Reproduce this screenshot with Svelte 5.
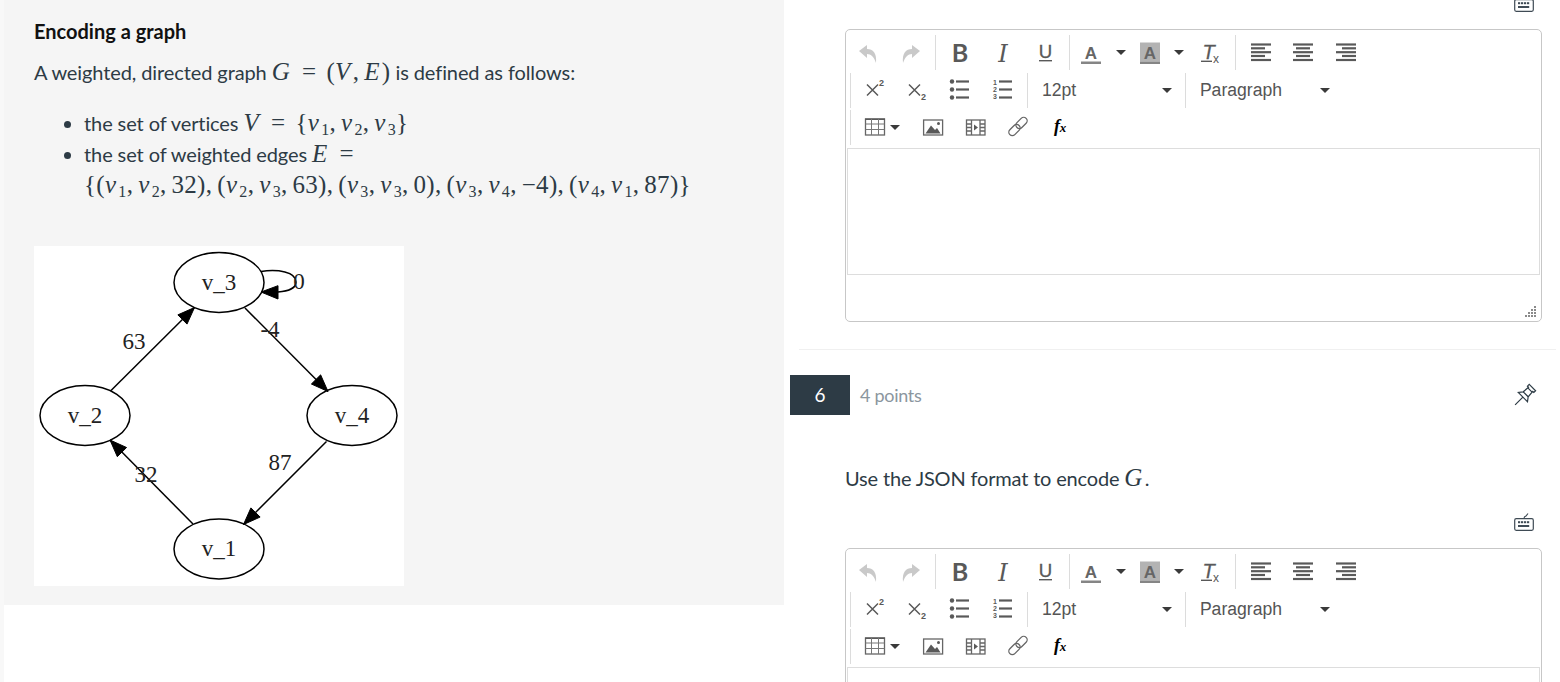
<script>
	const edges = [
		{ from: [111, 390.5], to: [194.5, 307.5] },
		{ from: [245, 308], to: [328, 391.5] },
		{ from: [326.5, 441.5], to: [243.5, 524.5] },
		{ from: [193, 524], to: [110, 440] }
	];

	const nodes = [
		{ name: 'v_3', x: 219, y: 282.5, base: 290 },
		{ name: 'v_2', x: 85, y: 415.5, base: 423 },
		{ name: 'v_4', x: 352, y: 415.5, base: 423 },
		{ name: 'v_1', x: 219, y: 549, base: 556 }
	];

	const labels = [
		{ text: '0', x: 299, y: 289 },
		{ text: '-4', x: 270, y: 337 },
		{ text: '63', x: 134, y: 349 },
		{ text: '87', x: 280, y: 470 },
		{ text: '32', x: 146, y: 482 }
	];

	const tuples = [
		[1, 2, '32'],
		[2, 3, '63'],
		[3, 3, '0'],
		[3, 4, '−4'],
		[4, 1, '87']
	];

	// arrowhead polygon for a straight edge
	function head(edge) {
		const [x1, y1] = edge.from;
		const [x2, y2] = edge.to;
		const len = Math.hypot(x2 - x1, y2 - y1);
		const ux = (x2 - x1) / len;
		const uy = (y2 - y1) / len;
		const bx = x2 - ux * 17;
		const by = y2 - uy * 17;
		return `${x2},${y2} ${bx - uy * 6.5},${by + ux * 6.5} ${bx + uy * 6.5},${by - ux * 6.5}`;
	}

	// dots of the resize grip, bottom right corner
	const grip = [];
	for (let row = 0; row < 4; row++) {
		for (let col = 3 - row; col < 4; col++) {
			grip.push({ x: col * 3, y: row * 3 });
		}
	}

	const gridX = [8.5, 15.5];
	const gridY = [8, 13.5];
	const alignLines = [3.5, 7.3, 11.2, 15, 19];
</script>

{#snippet vertex(n)}<i>v</i><sub>{n}</sub>{/snippet}

{#snippet aligned(x1, x2)}
	<svg viewBox="0 0 24 24">
		{#each alignLines as y, i}
			<line x1={i % 2 ? x1 : 2} x2={i % 2 ? x2 : 22} y1={y} y2={y} class="thick" />
		{/each}
	</svg>
{/snippet}

{#snippet keyboard()}
	<div class="kb-row">
		<svg class="kb" viewBox="0 0 20 18">
			<rect x="0.7" y="5.7" width="18.6" height="11.6" rx="1.5" />
			<path d="M10 5.5 Q10 3.5 12 3 L14 0.5" />
			{#each [4, 7, 10, 13] as x}
				<rect class="key" {x} y="8.2" width="2.2" height="2" />
			{/each}
			<rect class="key" x="4" y="12" width="11.2" height="2" />
		</svg>
	</div>
{/snippet}

{#snippet editor()}
	<div class="editor">
		<div class="toolbar">
			<div class="row">
				<div class="group first">
					<span class="btn">
						<svg viewBox="0 0 24 24"><path class="off" d="M3 10 L11 4 V8 C17 8 21 12 20 22 C18 16 15 13 11 13 V17 Z" /></svg>
					</span>
					<span class="btn">
						<svg viewBox="0 0 24 24"><path class="off" d="M21 10 L13 4 V8 C7 8 3 12 4 22 C6 16 9 13 13 13 V17 Z" /></svg>
					</span>
				</div>
				<div class="group">
					<span class="btn">
						<svg viewBox="0 0 24 24"><text x="12" y="20.5" class="tb">B</text></svg>
					</span>
					<span class="btn">
						<svg viewBox="0 0 24 24"><text x="12" y="20.5" class="ti">I</text></svg>
					</span>
					<span class="btn">
						<svg viewBox="0 0 24 24">
							<text x="12.5" y="16.8" class="tu">U</text>
							<rect x="6" y="19" width="13" height="1.4" class="solid" />
						</svg>
					</span>
				</div>
				<div class="group colors">
					<span class="btn">
						<svg viewBox="0 0 24 24">
							<text x="12" y="17.5" class="ta">A</text>
							<rect x="2" y="20.5" width="20" height="2.5" class="bar" />
						</svg>
					</span>
					<span class="split"><span class="caret"></span></span>
					<span class="btn">
						<svg viewBox="0 0 24 24">
							<rect x="2" y="1.5" width="20" height="19" class="hl" />
							<text x="12" y="17.5" class="ta">A</text>
							<rect x="2" y="20.5" width="20" height="2.5" class="bar" />
						</svg>
					</span>
					<span class="split"><span class="caret"></span></span>
					<span class="btn clear">
						<svg viewBox="0 0 24 24">
							<text x="9.5" y="17.5" class="tt">T</text>
							<rect x="2" y="19.6" width="11" height="1.4" class="solid" />
							<text x="14" y="21.5" class="tx">x</text>
						</svg>
					</span>
				</div>
				<div class="group last">
					<span class="btn">{@render aligned(2, 16)}</span>
					<span class="btn">{@render aligned(5, 19)}</span>
					<span class="btn">{@render aligned(8, 22)}</span>
				</div>
			</div>

			<div class="row indented">
				<div class="group lists">
					<span class="btn">
						<svg viewBox="0 0 24 24">
							<path class="line" d="M5 6.5 L16 17.5 M16 6.5 L5 17.5" />
							<text x="17" y="8" class="tiny">2</text>
						</svg>
					</span>
					<span class="btn">
						<svg viewBox="0 0 24 24">
							<path class="line" d="M4 6.5 L15 17.5 M15 6.5 L4 17.5" />
							<text x="16" y="22" class="tiny">2</text>
						</svg>
					</span>
					<span class="btn">
						<svg viewBox="0 0 24 24">
							{#each [3.5, 11.5, 19.5] as y}
								<circle cx="5" cy={y} r="2.2" class="solid" />
								<line x1="9" x2="22" y1={y} y2={y} class="thick" />
							{/each}
						</svg>
					</span>
					<span class="btn">
						<svg viewBox="0 0 24 24">
							{#each [1, 2, 3] as n}
								<text x="5" y={n * 7 - 0.5} class="num">{n}</text>
								<line x1="9" x2="22" y1={n * 8 - 4.5} y2={n * 8 - 4.5} class="thick" />
							{/each}
						</svg>
					</span>
				</div>
				<div class="group select size">
					<span>12pt</span>
					<span class="caret"></span>
				</div>
				<div class="group select format">
					<span>Paragraph</span>
					<span class="caret"></span>
				</div>
			</div>

			<div class="row indented">
				<div class="group plain">
					<span class="btn table">
						<svg viewBox="0 0 24 24">
							<rect x="2.5" y="3" width="19" height="16" class="outline" />
							<rect x="2" y="2.5" width="20" height="1.5" class="solid" />
							{#each gridX as x}
								<line x1={x} x2={x} y1="3" y2="19" class="grid" />
							{/each}
							{#each gridY as y}
								<line x1="2.5" x2="21.5" y1={y} y2={y} class="grid" />
							{/each}
						</svg>
						<span class="caret"></span>
					</span>
					<span class="btn">
						<svg viewBox="0 0 24 24">
							<rect x="2.6" y="4" width="19" height="15" class="outline" />
							<path class="solid" d="M4.5 17.5 L10 9.5 L14 14 L16 12 L19.5 17.5 Z" />
							<circle cx="17.5" cy="7.5" r="1.5" class="solid" />
						</svg>
					</span>
					<span class="btn">
						<svg viewBox="0 0 24 24">
							<rect x="2.5" y="4" width="18.5" height="15" class="outline" />
							<path class="outline" d="M7.5 4 V19 M16 4 V19 M2.5 8 H7.5 M2.5 11.5 H7.5 M2.5 15 H7.5 M16 8 H21 M16 11.5 H21 M16 15 H21" />
							<path class="solid" d="M10 8.5 L14 11.5 L10 14.5 Z" />
						</svg>
					</span>
					<span class="btn">
						<svg viewBox="0 0 24 24">
							<g transform="rotate(-45 12 10.5)">
								<rect x="0.5" y="7" width="13" height="7" rx="3.5" class="outline" />
								<rect x="10.5" y="7" width="13" height="7" rx="3.5" class="outline" />
							</g>
						</svg>
					</span>
					<span class="btn">
						<svg viewBox="0 0 24 24">
							<text x="8" y="15.5" class="fx">f</text>
							<text x="14" y="15.5" class="fx small">x</text>
						</svg>
					</span>
				</div>
			</div>
		</div>
		<div class="area"></div>
		<div class="status">
			<svg class="grip" viewBox="0 0 12 12">
				{#each grip as dot}
					<rect x={dot.x} y={dot.y} width="2" height="2" />
				{/each}
			</svg>
		</div>
	</div>
{/snippet}

<div class="page">
	<section class="intro">
		<h3>Encoding a graph</h3>
		<p>
			A weighted, directed graph
			<span class="math"><i>G</i><span class="rel">=</span>(<i>V</i>,<span class="sp"></span><i>E</i>)</span>
			is defined as follows:
		</p>
		<ul>
			<li>
				the set of vertices
				<span class="math"><i>V</i><span class="rel">=</span>&#123;{@render vertex(1)},<span class="sp"></span>{@render vertex(2)},<span class="sp"></span>{@render vertex(3)}&#125;</span>
			</li>
			<li>
				the set of weighted edges
				<span class="math"><i>E</i><span class="rel">=</span></span>
				<span class="math wide">&#123;{#each tuples as t, i}({@render vertex(t[0])},<span class="sp"></span>{@render vertex(t[1])},<span class="sp"></span>{t[2]}){#if i < tuples.length - 1},<span class="sp"></span>{/if}{/each}&#125;</span>
			</li>
		</ul>
		<svg class="figure" viewBox="34 246 370 340">
			{#each nodes as node}
				<ellipse cx={node.x} cy={node.y} rx="45" ry="30" />
				<text x={node.x} y={node.base}>{node.name}</text>
			{/each}
			{#each edges as edge}
				<line x1={edge.from[0]} y1={edge.from[1]} x2={edge.to[0]} y2={edge.to[1]} />
				<polygon points={head(edge)} />
			{/each}
			<path d="M261 271.5 C278 269 296 272 296 282 C296 289 288 291 278 292" />
			<polygon points="261,292 278,285.7 278,299" />
			{#each labels as label}
				<text x={label.x} y={label.y}>{label.text}</text>
			{/each}
		</svg>
	</section>

	<section class="answers">
		{@render keyboard()}
		{@render editor()}
		<hr />
		<div class="q-head">
			<span class="badge">6</span>
			<span class="points">4 points</span>
			<svg class="pin" viewBox="0 0 24 24">
				<g transform="rotate(45 12 12)">
					<path d="M7.5 1.5 H16.5 V4 H15 L15.5 11 L18.5 15 H5.5 L8.5 11 L9 4 H7.5 Z" />
					<path d="M9 5 H15 M8.5 11 H15.5 M12 15 V26" />
				</g>
			</svg>
		</div>
		<p class="prompt">Use the JSON format to encode <span class="math"><i>G</i></span>.</p>
		{@render keyboard()}
		{@render editor()}
	</section>
</div>

<style>
	:global(body) {
		overflow: hidden;
		background: #fff;
	}

	.page {
		display: flex;
		align-items: flex-start;
		height: 682px;
		overflow: hidden;
		border-left: 4px solid #f8f8f8;
		font-family: Lato, sans-serif;
		color: #2d3b45;
	}

	/* ------ left panel ------ */
	.intro {
		flex: none;
		width: 780px;
		box-sizing: border-box;
		padding: 18px 30px 19px;
		background: #f5f5f5;
	}

	h3 {
		margin: 0;
		font-size: 20px;
		line-height: 27px;
		font-weight: 700;
		color: #111;
	}

	.intro p {
		margin: 12px 0 0;
		font-size: 20px;
		line-height: 30px;
		letter-spacing: -0.1px;
	}

	ul {
		margin: 21px 0 0;
		padding-left: 50px;
		font-size: 20px;
		line-height: 31px;
		letter-spacing: -0.1px;
	}

	.math {
		font-family: 'Liberation Serif', serif;
		font-size: 25px;
		line-height: 0;
		letter-spacing: 0.3px;
		white-space: nowrap;
	}

	.math i {
		padding-right: 2px;
	}

	.math sub {
		font-size: 16px;
		line-height: 0;
		vertical-align: -4px;
	}

	.rel {
		margin: 0 10px;
	}

	.sp {
		display: inline-block;
		width: 5px;
	}

	.wide {
		display: block;
		margin-top: -1px;
		line-height: 31px;
	}

	.figure {
		display: block;
		width: 370px;
		height: 340px;
		margin-top: 46px;
		background: #fff;
	}

	.figure ellipse,
	.figure line,
	.figure path {
		fill: none;
		stroke: #000;
		stroke-width: 1.5;
	}

	.figure polygon {
		fill: #000;
		stroke: #000;
	}

	.figure text {
		font-family: 'Liberation Serif', serif;
		font-size: 23px;
		text-anchor: middle;
		fill: #222;
	}

	/* ------ right column ------ */
	.answers {
		flex: 1;
		min-width: 0;
		margin-top: -6px;
	}

	.kb-row {
		display: flex;
		justify-content: flex-end;
		padding-right: 26px;
		margin-bottom: 17px;
	}

	.kb {
		display: block;
		width: 20px;
		height: 18px;
		fill: none;
		stroke: #3f4b55;
		stroke-width: 1.2;
	}

	.kb .key {
		fill: #3f4b55;
		stroke: none;
	}

	.editor {
		box-sizing: border-box;
		height: 293px;
		margin: 0 18px 0 61px;
		border: 1px solid #c7c7c7;
		border-radius: 5px;
		background: #fff;
		display: flex;
		flex-direction: column;
	}

	.toolbar {
		display: flex;
		flex-direction: column;
		gap: 2.5px;
		padding: 5px 0 3px;
	}

	.row {
		display: flex;
		height: 35px;
		padding-left: 1px;
	}

	.row.indented {
		padding-left: 4px;
	}

	.row.indented .group:first-child {
		border-left: 1px solid #dcdcdc;
		padding-left: 2px;
	}

	.group {
		display: flex;
		align-items: center;
		padding: 0 2.5px 0 3px;
		border-right: 1px solid #dcdcdc;
	}

	.group.first,
	.group.colors {
		padding-left: 0;
	}

	.group.lists {
		padding-right: 3.5px;
	}

	.group.last,
	.group.plain {
		border-right: 0;
	}

	.btn {
		display: flex;
		align-items: center;
		justify-content: center;
		flex: none;
		width: 42.6px;
		height: 35px;
	}

	.btn.clear {
		margin-left: 3px;
	}

	.btn svg {
		display: block;
		width: 24px;
		height: 24px;
		flex: none;
		overflow: visible;
	}

	.btn.table {
		width: 59px;
		justify-content: flex-start;
		padding-left: 10px;
		box-sizing: border-box;
		gap: 3px;
	}

	.split {
		display: flex;
		justify-content: center;
		width: 16px;
		flex: none;
	}

	.caret {
		display: block;
		flex: none;
		width: 0;
		height: 0;
		border-left: 5px solid transparent;
		border-right: 5px solid transparent;
		border-top: 5px solid #3a3a3a;
	}

	.select {
		box-sizing: border-box;
		justify-content: space-between;
		font-family: 'Liberation Sans', sans-serif;
		font-size: 17.6px;
		color: #555;
		padding: 0 14px;
	}

	.size {
		width: 158px;
		padding-right: 13px;
	}

	.format {
		width: 158px;
		border-right: 0;
	}

	svg .off {
		fill: #c9c9c9;
	}

	svg .thick {
		stroke: #595959;
		stroke-width: 2.2;
	}

	svg .line {
		fill: none;
		stroke: #595959;
		stroke-width: 1.5;
	}

	svg .outline {
		fill: none;
		stroke: #666;
		stroke-width: 1.3;
	}

	svg .grid {
		stroke: #777;
		stroke-width: 1;
	}

	svg .solid {
		fill: #595959;
	}

	svg .bar {
		fill: #858585;
	}

	svg .hl {
		fill: #b3b3b3;
	}

	svg text {
		font-family: 'Liberation Sans', sans-serif;
		fill: #595959;
		text-anchor: middle;
	}

	svg .tb {
		font-family: Lato, sans-serif;
		font-size: 25px;
		font-weight: 700;
	}

	svg .ti {
		font-family: 'DejaVu Serif', serif;
		font-size: 24px;
		font-style: italic;
	}

	svg .tu {
		font-size: 18.6px;
		stroke: #595959;
		stroke-width: 0.3;
	}

	svg .ta {
		font-size: 17px;
		font-weight: 700;
		fill: #666;
	}

	svg .tt {
		font-size: 20px;
		font-style: italic;
		stroke: #595959;
		stroke-width: 0.3;
	}

	svg .tx {
		font-size: 12px;
		text-anchor: start;
	}

	svg .tiny {
		font-size: 9px;
		font-weight: 700;
		text-anchor: start;
	}

	svg .num {
		font-size: 7px;
		font-weight: 700;
	}

	svg .fx {
		font-family: 'Liberation Serif', serif;
		font-size: 18px;
		font-weight: 700;
		font-style: italic;
		fill: #000;
	}

	svg .fx.small {
		font-size: 13px;
	}

	.area {
		height: 127px;
		flex: none;
		margin: 0 1px;
		border: 1px solid #ddd;
		box-sizing: border-box;
	}

	.status {
		flex: 1;
		display: flex;
		justify-content: flex-end;
		align-items: flex-end;
		padding: 0 4px 3px 0;
	}

	.grip {
		width: 12px;
		height: 12px;
		fill: #8a8a8a;
	}

	hr {
		height: 1px;
		margin: 27px 4px 25px 15px;
		border: 0;
		background: #f0f0f0;
	}

	.q-head {
		display: flex;
		align-items: center;
		margin-left: 6px;
		height: 40px;
	}

	.badge {
		flex: none;
		width: 60px;
		height: 40px;
		line-height: 40px;
		text-align: center;
		background: #2d3b45;
		color: #fff;
		font-size: 19px;
	}

	.points {
		margin-left: 10px;
		font-size: 18px;
		letter-spacing: -0.3px;
		color: #8b969e;
	}

	.pin {
		width: 24px;
		height: 24px;
		margin: 0 23px 0 auto;
		fill: none;
		stroke: #2d3b45;
		stroke-width: 1.2;
		overflow: visible;
	}

	.prompt {
		margin: 49px 0 21px 61px;
		font-size: 20px;
		line-height: 28px;
		letter-spacing: -0.17px;
	}
</style>
